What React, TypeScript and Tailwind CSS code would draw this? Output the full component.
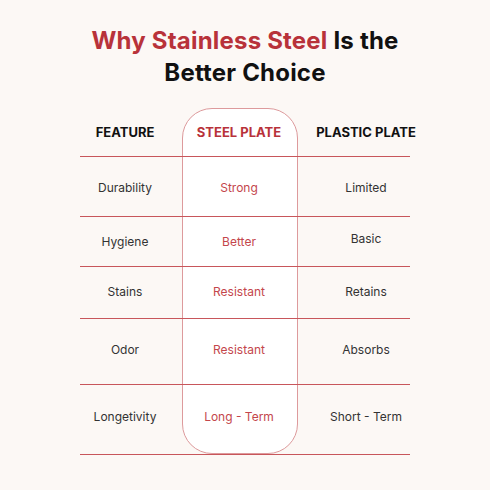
import React from "react";

const rows = [
  { f: "Durability", s: "Strong", p: "Limited", h: "h-[60px]", pad: "pt-[2px]", ppad: "pt-[2px]" },
  { f: "Hygiene", s: "Better", p: "Basic", h: "h-[50px]", pad: "pt-[0px]", ppad: "pb-[6px]" },
  { f: "Stains", s: "Resistant", p: "Retains", h: "h-[52px]", pad: "pb-[1px]", ppad: "pb-[1px]" },
  { f: "Odor", s: "Resistant", p: "Absorbs", h: "h-[66px]", pad: "pb-[3px]", ppad: "pb-[3px]" },
  { f: "Longetivity", s: "Long - Term", p: "Short - Term", h: "h-[70px]", pad: "pb-[5px]", ppad: "pb-[5px]" },
];

export default function App() {
  return (
    <div
      className="w-[490px] h-[490px] bg-[#fcf8f5] flex flex-col items-center overflow-hidden"
      style={{ fontFamily: "Inter, 'Noto Sans', sans-serif" }}
    >
      <h1 className="mt-[25px] text-center text-[24px] leading-[32px] font-bold text-[#111] tracking-[0.2px]">
        <span className="text-[#b8323a]">Why Stainless Steel</span> Is the
        <br />
        Better Choice
      </h1>
      <div className="relative mt-[19px] w-[330px]">
        <div className="absolute left-[102px] top-0 w-[116px] h-[346px] bg-white border border-[#dd9a9c] rounded-[30px]" />
        <div className="relative grid grid-cols-[90px_138px_102px] h-[49px] border-b-[1.5px] border-[#c8565b] text-[13px] font-bold">
          <div className="flex items-center justify-center pt-[1px] text-[#111]">FEATURE</div>
          <div className="flex items-center justify-center pt-[1px] text-[#b8323a]">STEEL PLATE</div>
          <div className="flex items-center justify-center pt-[1px] pl-[14px] text-[#111] whitespace-nowrap">PLASTIC PLATE</div>
        </div>
        {rows.map((r) => (
          <div
            key={r.f}
            className={`relative grid grid-cols-[90px_138px_102px] ${r.h} border-b-[1.5px] border-[#c8565b] text-[12px]`}
          >
            <div className={`flex items-center justify-center text-[#333] ${r.pad}`}>{r.f}</div>
            <div className={`flex items-center justify-center text-[#c4464c] ${r.pad}`}>{r.s}</div>
            <div className={`flex items-center justify-center pl-[14px] text-[#333] whitespace-nowrap ${r.ppad}`}>{r.p}</div>
          </div>
        ))}
      </div>
    </div>
  );
}
